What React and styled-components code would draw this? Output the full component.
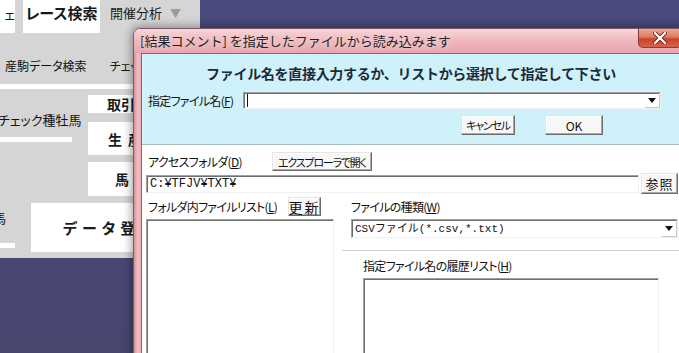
import React from "react";
import styled, { createGlobalStyle } from "styled-components";

const GlobalStyle = createGlobalStyle`
  html, body {
    margin: 0;
    padding: 0;
  }
  body {
    width: 679px;
    height: 353px;
    overflow: hidden;
    background: #4b4a7a;
    font-family: "Noto Sans CJK JP", "Noto Sans", sans-serif;
    color: #111;
  }
`;

const Desktop = styled.div`
  position: relative;
  width: 679px;
  height: 353px;
  overflow: hidden;
  background: linear-gradient(to bottom, #4a4a7c, #46466f);
`;

/* ---------- main app window behind the dialog ---------- */

const AppWindow = styled.div`
  width: 200px;
  height: 258px;
  background: #d5d5d5;
  display: flex;
  flex-direction: column;
  overflow: hidden;
  font-feature-settings: "palt";
`;

const TabRow = styled.div`
  display: flex;
  height: 33px;
  flex-shrink: 0;
`;

const Tab = styled.div`
  background: ${(p) => (p.$active ? "#ffffff" : "transparent")};
  width: ${(p) => p.$width}px;
  margin-left: ${(p) => p.$gap || 0}px;
  font-size: ${(p) => (p.$active ? 15 : 13)}px;
  font-weight: ${(p) => (p.$active ? 700 : 400)};
  line-height: 26px;
  text-align: ${(p) => p.$align || "center"};
  color: #1a1a1a;
  white-space: nowrap;
  overflow: hidden;
`;

const TabArrow = styled.span`
  color: #9a9a9a;
  font-size: 11px;
  margin-left: 8px;
`;

const SubMenu = styled.div`
  display: flex;
  gap: 23px;
  height: 51px;
  padding: 25px 0 0 5px;
  box-sizing: border-box;
  font-size: 12px;
  line-height: 16px;
  white-space: nowrap;
  flex-shrink: 0;
`;

const WhiteBar = styled.div`
  background: #ffffff;
  height: 5px;
  width: ${(p) => p.$width || "100%"};
  margin-top: ${(p) => p.$top || 0}px;
  flex-shrink: 0;
`;

const MidGrid = styled.div`
  display: grid;
  grid-template-columns: 88px 1fr;
  height: 107px;
  flex-shrink: 0;
`;

const SideCol = styled.div`
  display: flex;
  flex-direction: column;
  padding-top: ${(p) => p.$top || 0}px;
`;

const SideLabel = styled.div`
  font-size: 13px;
  line-height: 16px;
  white-space: nowrap;
  margin-left: ${(p) => p.$shift || 0}px;
`;

const MenuBox = styled.div`
  background: #ffffff;
  height: ${(p) => p.$h}px;
  margin-top: ${(p) => p.$top || 0}px;
  padding-left: ${(p) => p.$pad || 20}px;
  display: flex;
  align-items: center;
  font-size: ${(p) => p.$size || 14}px;
  font-weight: 700;
  letter-spacing: ${(p) => p.$spacing || 0}px;
  white-space: nowrap;
  color: #1a1a1a;
`;

const BottomRow = styled.div`
  display: grid;
  grid-template-columns: 31px 1fr;
  flex: 1;
`;

/* ---------- dialog ---------- */

const Dialog = styled.div`
  position: absolute;
  left: 133px;
  top: 28px;
  width: 556px;
  height: 340px;
  border-radius: 7px 7px 0 0;
  background: linear-gradient(to right, #d98f98 0px, #f0c0c5 4px, #e8a3aa 8px, #e8a3aa 548px, #f0c0c5 552px, #d98f98 556px);
  box-shadow: 0 0 8px 2px rgba(0, 0, 0, 0.35);
  border: 1px solid #7c5a66;
  box-sizing: border-box;
  display: flex;
  flex-direction: column;
`;

const TitleBar = styled.div`
  height: 24px;
  display: flex;
  align-items: flex-start;
  flex-shrink: 0;
  border-radius: 6px 6px 0 0;
  background: linear-gradient(to bottom, #f6d6d9 0%, #efb9be 45%, #e9a5ac 100%);
`;

const TitleText = styled.div`
  font-size: 13px;
  line-height: 24px;
  padding-left: 6px;
  color: #222;
  text-shadow: 0 0 6px rgba(255, 240, 240, 0.9);
  white-space: nowrap;
`;

const CloseButton = styled.div`
  margin-left: auto;
  margin-right: 6px;
  width: 44px;
  height: 19px;
  box-sizing: border-box;
  border: 1px solid #8a3b35;
  border-top: none;
  border-radius: 0 0 5px 5px;
  background: linear-gradient(to bottom, #eda891 0%, #de7a5f 45%, #c9442d 55%, #d9634a 100%);
  display: flex;
  align-items: center;
  justify-content: center;
`;

const Client = styled.div`
  flex: 1;
  margin: 0 7px;
  border: 1px solid #a55a62;
  border-bottom: none;
  background: #ffffff;
  display: flex;
  flex-direction: column;
  font-size: 12px;
  font-feature-settings: "palt";
`;

const TopPanel = styled.div`
  height: 90px;
  background: #cff1fa;
  border-bottom: 1px solid #aab8bf;
  display: flex;
  flex-direction: column;
  flex-shrink: 0;
`;

const Heading = styled.div`
  margin-top: 10px;
  text-align: center;
  font-size: 14px;
  font-weight: 700;
  line-height: 18px;
  letter-spacing: -0.3px;
  color: #1b2a3a;
  font-feature-settings: normal;
`;

const FieldRow = styled.div`
  display: flex;
  align-items: center;
  margin-top: ${(p) => p.$top || 0}px;
  padding-left: ${(p) => p.$pad || 0}px;
  gap: ${(p) => p.$gap || 0}px;
`;

const Label = styled.div`
  width: ${(p) => (p.$width ? `${p.$width}px` : "auto")};
  padding-left: ${(p) => p.$pad ?? 6}px;
  box-sizing: border-box;
  line-height: ${(p) => p.$lh || 16}px;
  letter-spacing: -0.7px;
  white-space: nowrap;
  flex-shrink: 0;
  color: #111;
`;

const Sunken = styled.div`
  box-sizing: border-box;
  width: ${(p) => p.$width}px;
  height: ${(p) => p.$h}px;
  margin-left: ${(p) => p.$left || 0}px;
  margin-top: ${(p) => p.$top || 0}px;
  background: #ffffff;
  border-top: 1px solid #a0a0a0;
  border-left: 1px solid #a0a0a0;
  border-right: 1px solid #f0f0f0;
  border-bottom: 1px solid #f0f0f0;
  box-shadow: inset 1px 1px 0 #6e6e6e;
  display: flex;
  align-items: center;
  flex-shrink: 0;
`;

const ComboText = styled.div`
  flex: 1;
  padding-left: ${(p) => p.$pad || 3}px;
  font-family: "Liberation Mono", "Noto Sans CJK JP", monospace;
  font-size: ${(p) => p.$size || 12}px;
  line-height: 16px;
  font-feature-settings: normal;
  white-space: nowrap;
  color: #111;
`;

const Caret = styled.span`
  display: inline-block;
  width: 1px;
  height: 13px;
  background: #111;
  vertical-align: middle;
`;

const ArrowBox = styled.div`
  width: 15px;
  height: 100%;
  display: flex;
  align-items: center;
  justify-content: center;
  border-right: 1px solid #c8c8c8;
  border-bottom: 1px solid #c8c8c8;
  box-sizing: border-box;
`;

const Button = styled.div`
  box-sizing: border-box;
  width: ${(p) => p.$width}px;
  height: ${(p) => p.$h || 20}px;
  margin-left: ${(p) => p.$left || 0}px;
  background: #f7f7f7;
  border: 1px solid;
  border-color: #e4e4e4 #6c6c6c #6c6c6c #e4e4e4;
  box-shadow: inset -1px -1px 0 #a9a9a9, inset 1px 1px 0 #ffffff;
  display: flex;
  align-items: center;
  justify-content: center;
  font-size: ${(p) => p.$size || 11}px;
  letter-spacing: ${(p) => p.$spacing ?? -1.2}px;
  white-space: nowrap;
  color: #111;
  flex-shrink: 0;
`;

const Body = styled.div`
  flex: 1;
  display: flex;
  flex-direction: column;
`;

const Columns = styled.div`
  display: grid;
  grid-template-columns: 192px 1fr;
  column-gap: 8px;
  margin-top: 3px;
  flex: 1;
`;

const Column = styled.div`
  display: flex;
  flex-direction: column;
`;

const GroupLine = styled.div`
  margin-top: 12px;
  border-top: 1px solid #cfcfcf;
  box-shadow: 0 1px 0 #ffffff;
`;

const Arrow = () => (
  <svg width="8" height="5" viewBox="0 0 8 5">
    <path d="M0 0 H8 L4 5 Z" fill="#111" />
  </svg>
);

const CloseX = () => (
  <svg width="14" height="12" viewBox="0 0 14 12">
    <path d="M2 1 L12 11 M12 1 L2 11" stroke="#6b2a22" strokeWidth="4" strokeLinecap="round" />
    <path d="M2 1 L12 11 M12 1 L2 11" stroke="#ffffff" strokeWidth="2.2" strokeLinecap="round" />
  </svg>
);

const App = () => {
  return (
    <Desktop>
      <GlobalStyle />
      <AppWindow>
        <TabRow>
          <Tab $active $width={15} $align="right">
            <span style={{ fontWeight: 400, fontSize: 13 }}>ェ</span>
          </Tab>
          <Tab $active $width={77} $gap={8}>
            レース検索
          </Tab>
          <Tab $width={90} $gap={10} $align="left">
            開催分析<TabArrow>▼</TabArrow>
          </Tab>
        </TabRow>
        <SubMenu>
          <span>産駒データ検索</span>
          <span>チェック馬検索</span>
        </SubMenu>
        <WhiteBar />
        <MidGrid>
          <SideCol $top={23}>
            <SideLabel $shift={-2}>チェック種牡馬</SideLabel>
            <WhiteBar $width="72px" $top={9} />
          </SideCol>
          <SideCol $top={6}>
            <MenuBox $h={18} $pad={19}>取引</MenuBox>
            <MenuBox $h={33} $top={9} $pad={20} $spacing={6}>
              生産
            </MenuBox>
            <MenuBox $h={34} $top={7} $pad={27}>
              馬
            </MenuBox>
          </SideCol>
        </MidGrid>
        <BottomRow>
          <SideCol $top={14}>
            <SideLabel $shift={-7}>馬</SideLabel>
            <WhiteBar $width="15px" $top={17} />
          </SideCol>
          <SideCol $top={7}>
            <MenuBox $h={49} $pad={32} $size={15} $spacing={5}>
              データ登録
            </MenuBox>
          </SideCol>
        </BottomRow>
      </AppWindow>

      <Dialog>
        <TitleBar>
          <TitleText>[結果コメント] を指定したファイルから読み込みます</TitleText>
          <CloseButton>
            <CloseX />
          </CloseButton>
        </TitleBar>
        <Client>
          <TopPanel>
            <Heading>ファイル名を直接入力するか、リストから選択して指定して下さい</Heading>
            <FieldRow $top={10}>
              <Label $width={101}>
                指定ファイル名(<u>F</u>)
              </Label>
              <Sunken $width={418} $h={17}>
                <ComboText>
                  <Caret />
                </ComboText>
                <ArrowBox>
                  <Arrow />
                </ArrowBox>
              </Sunken>
            </FieldRow>
            <FieldRow $top={6} $pad={319} $gap={30}>
              <Button $width={54}>キャンセル</Button>
              <Button $width={58} $size={12} $spacing={0}>
                OK
              </Button>
            </FieldRow>
          </TopPanel>

          <Body>
            <FieldRow $top={7}>
              <Label $width={130}>
                アクセスフォルダ(<u>D</u>)
              </Label>
              <Button $width={100} $h={19}>
                エクスプローラで開く
              </Button>
            </FieldRow>
            <FieldRow $top={2}>
              <Sunken $width={493} $h={18} $left={4}>
                <ComboText>C:¥TFJV¥TXT¥</ComboText>
              </Sunken>
              <Button $width={37} $h={21} $left={2} $size={13} $spacing={1}>
                参照
              </Button>
            </FieldRow>
            <Columns>
              <Column>
                <FieldRow>
                  <Label $width={146}>
                    フォルダ内ファイルリスト(<u>L</u>)
                  </Label>
                  <Button $width={33} $h={19} $size={14} $spacing={2}>
                    更新
                  </Button>
                </FieldRow>
                <Sunken $width={188} $h={140} $left={4} $top={3} />
              </Column>
              <Column>
                <FieldRow>
                  <Label $pad={9} $lh={19}>
                    ファイルの種類(<u>W</u>)
                  </Label>
                </FieldRow>
                <Sunken $width={327} $h={19} $left={9} $top={3}>
                  <ComboText $size={11}>CSVファイル(*.csv,*.txt)</ComboText>
                  <ArrowBox>
                    <Arrow />
                  </ArrowBox>
                </Sunken>
                <GroupLine />
                <FieldRow $top={7}>
                  <Label $pad={21}>
                    指定ファイル名の履歴リスト(<u>H</u>)
                  </Label>
                </FieldRow>
                <Sunken $width={296} $h={90} $left={21} $top={4} />
              </Column>
            </Columns>
          </Body>
        </Client>
      </Dialog>
    </Desktop>
  );
};

export default App;
